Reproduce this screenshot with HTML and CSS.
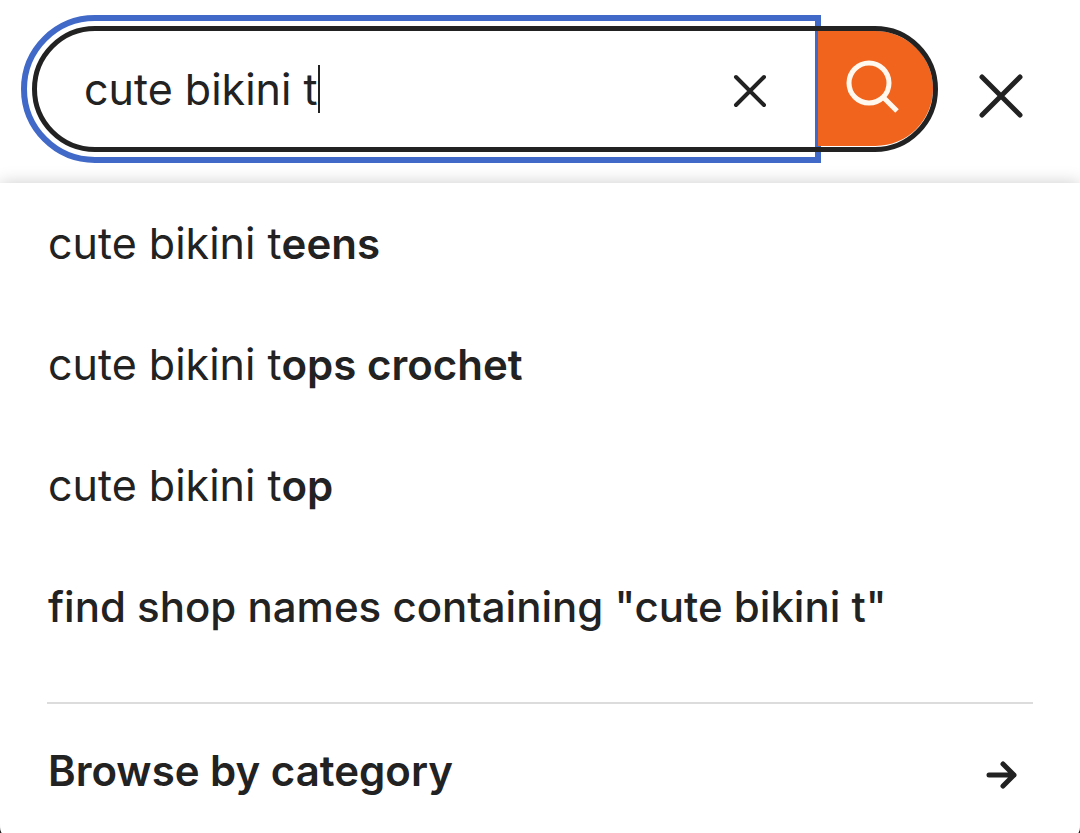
FILE: index.html
```html
<!DOCTYPE html>
<html lang="en">
<head>
<meta charset="utf-8">
<meta name="viewport" content="width=device-width, initial-scale=1">
<title>Search</title>
<link rel="stylesheet" href="styles.css">
</head>
<body>
<main class="page">
  <header class="topbar">
    <form class="search" role="search">
      <div class="search-field">
        <input class="search-input" type="text" value="cute bikini t" size="10" aria-label="Search" autocomplete="off">
        <span class="caret"></span>
        <button class="icon-button clear" type="reset" aria-label="Clear">
          <svg class="icon-clear" viewBox="0 0 34 34" aria-hidden="true"><path d="M3 3 31 31M31 3 3 31"/></svg>
        </button>
      </div>
      <button class="search-submit" type="submit" aria-label="Search">
        <svg class="icon-search" viewBox="0 0 54 54" aria-hidden="true"><circle cx="23" cy="23" r="20"/><path d="M37 37 51 51"/></svg>
      </button>
    </form>
    <button class="icon-button close" type="button" aria-label="Close search">
      <svg class="icon-close" viewBox="0 0 44 44" aria-hidden="true"><path d="M3 3 41 41M41 3 3 41"/></svg>
    </button>
  </header>
  <section class="panel">
    <ul class="suggestions">
      <li><a class="row match" href="#teens"><span>cute bikini t<b>eens</b></span></a></li>
      <li><a class="row match" href="#tops-crochet"><span>cute bikini t<b>ops crochet</b></span></a></li>
      <li><a class="row match" href="#top"><span>cute bikini t<b>op</b></span></a></li>
      <li><a class="row shops" href="#shops">find shop names containing "cute bikini t"</a></li>
    </ul>
    <a class="row browse" href="#categories">
      <span>Browse by category</span>
      <svg class="icon-arrow" viewBox="0 0 32 28" aria-hidden="true"><path d="M3 14H28M17 3 28 14 17 25"/></svg>
    </a>
  </section>
</main>
</body>
</html>
```

FILE: styles.css
```css
* {
  box-sizing: border-box;
}

body {
  margin: 0;
  background: #222;
  color: #222;
  font-family: Inter, "Liberation Sans", sans-serif;
  font-size: 42px;
  line-height: 52px;
}

button {
  padding: 0;
  border: 0;
  background: none;
  color: inherit;
  cursor: pointer;
}

svg {
  display: block;
  fill: none;
  stroke: currentColor;
}

.page {
  display: flex;
  flex-direction: column;
  min-height: 100vh;
  overflow: hidden;
  background: #fff;
  border-radius: 0 0 2px 2px / 0 0 10px 10px;
}

.topbar {
  display: flex;
  align-items: center;
  gap: 41px;
  padding: 26px 57px 31px 32px;
}

.search {
  position: relative;
  display: flex;
  flex: 1;
  min-width: 0;
  height: 126px;
}

/* pill border, drawn above the focus ring and the submit button */
.search::after {
  content: "";
  position: absolute;
  inset: 0;
  border: 5px solid #222;
  border-radius: 63px;
  pointer-events: none;
}

.search-field {
  display: flex;
  flex: 1;
  align-items: center;
  min-width: 0;
  margin: -11px 0 -11px -11px;
  padding: 0 48px 0 57px;
  border: 6px solid #4169c8;
  border-radius: 74px 0 0 74px;
}

.search-input {
  field-sizing: content;
  min-width: 0;
  padding: 0;
  border: 0;
  outline: 0;
  background: none;
  color: inherit;
  font: inherit;
  font-size: 43px;
}

.caret {
  flex: none;
  width: 2px;
  height: 48px;
  background: #222;
}

.icon-button {
  flex: none;
}

.clear {
  margin-top: 4px;
  margin-left: auto;
}

.search-submit {
  display: flex;
  align-items: center;
  justify-content: center;
  width: 115px;
  margin: 5px 5px 6px -3px;
  padding: 0 6px 4px 0;
  background: #f1641e;
  border-radius: 0 58px 58px 0;
  color: #fff8ee;
}

.close {
  margin-top: 14px;
}

.icon-clear {
  width: 34px;
  height: 34px;
  stroke-width: 4;
  stroke-linecap: round;
}

.icon-search {
  width: 54px;
  height: 54px;
  stroke-width: 5;
}

.icon-close {
  width: 44px;
  height: 44px;
  stroke-width: 5;
  stroke-linecap: round;
}

.panel {
  flex: 1;
  padding: 0 47px;
  background: #fff;
  box-shadow: 0 0 16px rgba(0, 0, 0, 0.2);
}

.suggestions {
  margin: 0;
  padding: 0 0 35px;
  border-bottom: 2px solid #dcdcdc;
  list-style: none;
}

.row {
  display: flex;
  align-items: center;
  min-height: 121px;
  padding-left: 1px;
  color: inherit;
  text-decoration: none;
}

.match {
  font-size: 43px;
}

.match b {
  font-size: 42px;
  font-weight: 600;
}

.shops {
  font-weight: 500;
}

.browse {
  justify-content: space-between;
  padding: 12px 15px 0 1px;
  font-weight: 600;
}

.icon-arrow {
  width: 32px;
  height: 28px;
  margin-top: 8px;
  stroke-width: 5;
  stroke-linecap: round;
  stroke-linejoin: round;
}
```
